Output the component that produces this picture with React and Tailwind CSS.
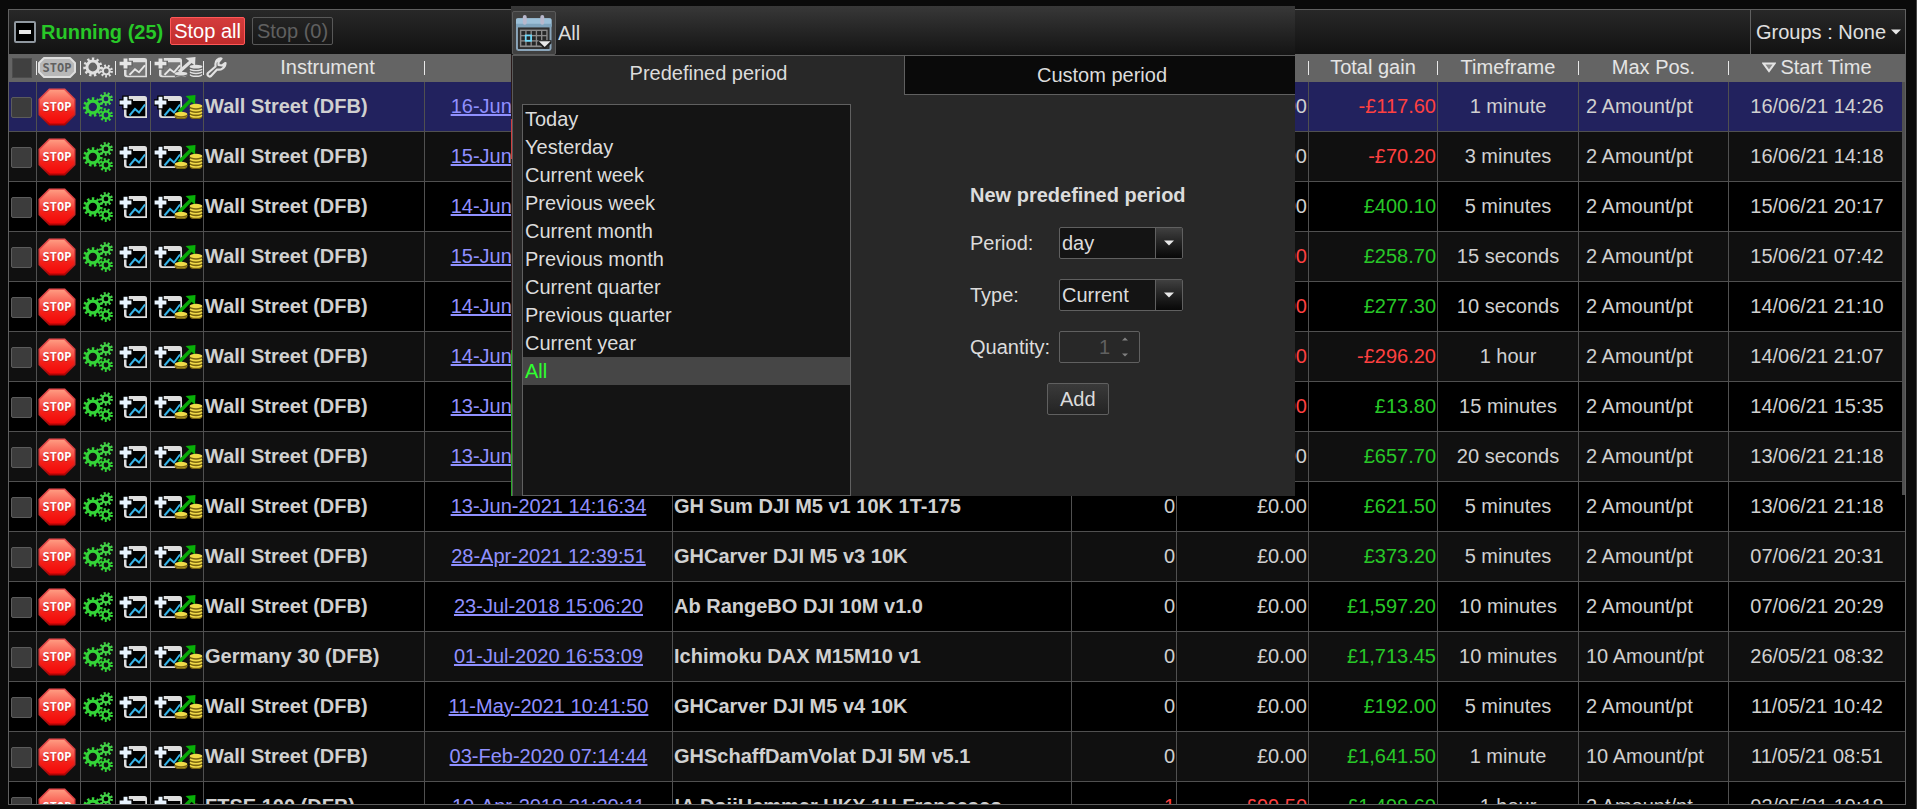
import React, { useState } from 'react';

const GREEN = 'text-[#28c828]';
const RED = 'text-[#ff4040]';

const PERIODS = [
  'Today',
  'Yesterday',
  'Current week',
  'Previous week',
  'Current month',
  'Previous month',
  'Current quarter',
  'Previous quarter',
  'Current year',
  'All',
];

const ROWS = [
  { instrument: 'Wall Street (DFB)', from: '16-Jun-2021 14:26:12', name: '', position: '0', gain: '£0.00', total: '-£117.60', timeframe: '1 minute', max: '2 Amount/pt', start: '16/06/21 14:26' },
  { instrument: 'Wall Street (DFB)', from: '15-Jun-2021 14:18:31', name: '', position: '0', gain: '£0.00', total: '-£70.20', timeframe: '3 minutes', max: '2 Amount/pt', start: '16/06/21 14:18' },
  { instrument: 'Wall Street (DFB)', from: '14-Jun-2021 20:17:04', name: '', position: '0', gain: '£0.00', total: '£400.10', timeframe: '5 minutes', max: '2 Amount/pt', start: '15/06/21 20:17' },
  { instrument: 'Wall Street (DFB)', from: '15-Jun-2021 07:42:10', name: '', position: '1', gain: '-£1.00', open: true, total: '£258.70', timeframe: '15 seconds', max: '2 Amount/pt', start: '15/06/21 07:42' },
  { instrument: 'Wall Street (DFB)', from: '14-Jun-2021 21:10:20', name: '', position: '1', gain: '-£1.00', open: true, total: '£277.30', timeframe: '10 seconds', max: '2 Amount/pt', start: '14/06/21 21:10' },
  { instrument: 'Wall Street (DFB)', from: '14-Jun-2021 21:07:44', name: '', position: '1', gain: '-£1.00', open: true, total: '-£296.20', timeframe: '1 hour', max: '2 Amount/pt', start: '14/06/21 21:07' },
  { instrument: 'Wall Street (DFB)', from: '13-Jun-2021 15:35:20', name: '', position: '1', gain: '-£1.00', open: true, total: '£13.80', timeframe: '15 minutes', max: '2 Amount/pt', start: '14/06/21 15:35' },
  { instrument: 'Wall Street (DFB)', from: '13-Jun-2021 21:18:40', name: '', position: '0', gain: '£0.00', total: '£657.70', timeframe: '20 seconds', max: '2 Amount/pt', start: '13/06/21 21:18' },
  { instrument: 'Wall Street (DFB)', from: '13-Jun-2021 14:16:34', name: 'GH Sum DJI M5 v1 10K 1T-175', position: '0', gain: '£0.00', total: '£621.50', timeframe: '5 minutes', max: '2 Amount/pt', start: '13/06/21 21:18' },
  { instrument: 'Wall Street (DFB)', from: '28-Apr-2021 12:39:51', name: 'GHCarver DJI M5 v3 10K', position: '0', gain: '£0.00', total: '£373.20', timeframe: '5 minutes', max: '2 Amount/pt', start: '07/06/21 20:31' },
  { instrument: 'Wall Street (DFB)', from: '23-Jul-2018 15:06:20', name: 'Ab RangeBO DJI 10M v1.0', position: '0', gain: '£0.00', total: '£1,597.20', timeframe: '10 minutes', max: '2 Amount/pt', start: '07/06/21 20:29' },
  { instrument: 'Germany 30 (DFB)', from: '01-Jul-2020 16:53:09', name: 'Ichimoku DAX M15M10 v1', position: '0', gain: '£0.00', total: '£1,713.45', timeframe: '10 minutes', max: '10 Amount/pt', start: '26/05/21 08:32' },
  { instrument: 'Wall Street (DFB)', from: '11-May-2021 10:41:50', name: 'GHCarver DJI M5 v4 10K', position: '0', gain: '£0.00', total: '£192.00', timeframe: '5 minutes', max: '2 Amount/pt', start: '11/05/21 10:42' },
  { instrument: 'Wall Street (DFB)', from: '03-Feb-2020 07:14:44', name: 'GHSchaffDamVolat DJI 5M v5.1', position: '0', gain: '£0.00', total: '£1,641.50', timeframe: '1 minute', max: '10 Amount/pt', start: '11/05/21 08:51' },
  { instrument: 'FTSE 100 (DFB)', from: '10-Apr-2018 21:20:11', name: '!A DojiHammer UKX 1H Francesco', position: '1', gain: '£99.50', open: true, total: '£1,498.60', timeframe: '1 hour', max: '2 Amount/pt', start: '03/05/21 19:18' },
];

const StopIcon = () => (
  <svg width="38" height="38" viewBox="0 0 38 38">
    <defs>
      <linearGradient id="stopRed" x1="0" y1="0" x2="0" y2="1">
        <stop offset="0" stopColor="#ff9a80" />
        <stop offset="0.4" stopColor="#f85a50" />
        <stop offset="0.65" stopColor="#f42018" />
        <stop offset="1" stopColor="#f40808" />
      </linearGradient>
      <linearGradient id="stopEdge" x1="0" y1="0" x2="0" y2="1">
        <stop offset="0" stopColor="#e85050" />
        <stop offset="0.6" stopColor="#d83030" />
        <stop offset="1" stopColor="#a80000" />
      </linearGradient>
    </defs>
    <polygon points="11,0.5 27,0.5 37.5,11 37.5,27 27,37.5 11,37.5 0.5,27 0.5,11" fill="url(#stopEdge)" />
    <polygon points="11.8,2 26.2,2 36,11.8 36,26 26.2,35.5 11.8,35.5 2,26 2,11.8" fill="url(#stopRed)" />
    <text x="19" y="24" textAnchor="middle" fontFamily="Liberation Sans Narrow, DejaVu Sans Mono, monospace" fontWeight="700" fontSize="12" fill="#c02020">STOP</text>
    <text x="19" y="23" textAnchor="middle" fontFamily="Liberation Sans Narrow, DejaVu Sans Mono, monospace" fontWeight="700" fontSize="12" fill="#ffffff">STOP</text>
  </svg>
);

const StopHeadIcon = () => (
  <svg width="38" height="21" viewBox="0 0 38 21">
    <polygon points="6,1 32,1 37,6 37,15 32,20 6,20 1,15 1,6" fill="#b8b8b8" stroke="#dedede" strokeWidth="2" strokeLinejoin="round" />
    <text x="19" y="15" textAnchor="middle" fontFamily="Liberation Sans Narrow, DejaVu Sans Mono, monospace" fontWeight="700" fontSize="12" fill="#606060">STOP</text>
  </svg>
);

const Gear = ({ cx, cy, r, teeth, color, width }) => {
  const toothRadius = r - 1.4;
  const step = (2 * Math.PI * toothRadius) / teeth;
  return (
    <g fill="none" stroke={color}>
      <circle cx={cx} cy={cy} r={r - 2.2 - width / 2} strokeWidth={width} />
      <circle cx={cx} cy={cy} r={toothRadius} strokeWidth="2.8" strokeDasharray={`${step * 0.5} ${step * 0.5}`} />
    </g>
  );
};

const GearsIcon = () => (
  <svg width="30" height="30" viewBox="0 0 30 30">
    <Gear cx={9.8} cy={15} r={9.8} teeth={11} width={3.4} color="#34d438" />
    <Gear cx={23} cy={6.9} r={6.9} teeth={9} width={2.3} color="#44d448" />
    <Gear cx={23} cy={23} r={6.9} teeth={9} width={2.3} color="#34d438" />
  </svg>
);

const GearsHeadIcon = () => (
  <svg width="30" height="21" viewBox="0 0 30 21">
    <Gear cx={9.8} cy={10} r={9.6} teeth={11} width={3} color="#e0e0e0" />
    <Gear cx={23.3} cy={14} r={6.6} teeth={9} width={2} color="#e0e0e0" />
  </svg>
);

// Chart window with a plus badge, "muted" is the grey header look
const ChartShape = ({ muted }) => (
  <g>
    <path d="M8 1 H25.500 a2.500 2.500 0 0 1 2.500 2.500 V23 H8 a3 3 0 0 1 -3 -3 V4 a3 3 0 0 1 3 -3 Z" fill="#dedede" />
    <path d="M7.500 6 H26.300 V21.300 H9 a1.500 1.500 0 0 1 -1.500 -1.500 Z" fill={muted ? '#757575' : '#000000'} />
    <path d="M10.500 20.500 L16 14 L20 17.500 L26 9.500" fill="none" stroke={muted ? '#e6e6e6' : '#35b4ea'} strokeWidth="2" />
    <path d="M6.500 0.500 V14.500 M0 7.500 H14" stroke={muted ? '#666666' : '#000000'} strokeWidth="6.500" />
    <path d="M6.500 1.800 V13.200 M0.600 7.500 H12.400" stroke={muted ? '#e6e6e6' : '#e8f4ff'} strokeWidth="3.900" />
  </g>
);

const ChartIcon = ({ muted }) => (
  <svg width="29" height={muted ? 21 : 24} viewBox="0 0 29 24" preserveAspectRatio="none">
    <ChartShape muted={muted} />
  </svg>
);

const Coin = ({ cx, cy, muted }) => (
  <g>
    <ellipse cx={cx} cy={cy + 1.2} rx="6.4" ry="2.6" fill={muted ? '#666666' : '#7a6410'} />
    <ellipse cx={cx} cy={cy} rx="6.4" ry="2.2" fill={muted ? '#e0e0e0' : '#f0da48'} />
  </g>
);

const ChartCoinsIcon = ({ muted }) => (
  <svg width="49" height={muted ? 21 : 24} viewBox="0 0 49 24" preserveAspectRatio="none">
    <ChartShape muted={muted} />
    <path d="M25 17 L38 4" stroke={muted ? '#e0e0e0' : '#08a808'} strokeWidth="3.600" />
    <path d="M31.500 1 L41.500 0 L41 10 Z" fill={muted ? '#e0e0e0' : '#08b008'} />
    <Coin cx={27} cy={20.600} muted={muted} />
    <Coin cx={27} cy={19} muted={muted} />
    <Coin cx={42} cy={20.600} muted={muted} />
    <Coin cx={42} cy={17.400} muted={muted} />
    <Coin cx={42} cy={14.200} muted={muted} />
    <Coin cx={42} cy={11} muted={muted} />
  </svg>
);

const WrenchIcon = () => (
  <svg width="21" height="21" viewBox="0 0 21 21" fill="none" stroke="#e2e2e2" strokeWidth="2.200" strokeLinejoin="round">
    <path d="M15.500 1.500 C12 1.200 9 4 9.500 8 L9.500 9.500 L2 16 C0.500 18 3 20.500 5 19 L11 12.500 C15 13.500 19.500 10.500 19.500 6 L16 8.500 L12.500 8 L12.500 5 Z" />
  </svg>
);

const CalendarIcon = () => (
  <svg width="36" height="36" viewBox="0 0 37 37">
    <rect x="1" y="4" width="34.500" height="32" rx="1.500" fill="#303030" stroke="#8ba6bb" strokeWidth="2" />
    <rect x="0" y="3.500" width="36.500" height="9" rx="1.500" fill="#9cc0d8" />
    <rect x="0" y="9" width="36.500" height="3.500" fill="#7fa4bd" />
    <rect x="4" y="15" width="28.500" height="18" fill="#8a8a8a" />
    {[0, 1, 2].map((row) =>
      [0, 1, 2, 3, 4].map((col) => (
        <rect key={`${row}-${col}`} x={5.5 + col * 5.4} y={16.5 + row * 5.4} width="4" height="4" fill="#262626" />
      ))
    )}
    <rect x="10" y="21" width="5.500" height="5.500" fill="#262626" stroke="#70d8f8" strokeWidth="1.800" />
    <rect x="7" y="0" width="4" height="10" rx="2" fill="#b8b8cc" />
    <rect x="25" y="0" width="4" height="10" rx="2" fill="#b8b8cc" />
    <path d="M23 26 H36.500 V29 L30.500 34.500 H28.500 L23 29 Z" fill="#202020" />
    <path d="M23.500 27 H35.500 L29.500 33 Z" fill="#e8e8e8" />
  </svg>
);

const Caret = () => (
  <svg width="10" height="6" viewBox="0 0 10 6">
    <path d="M0 0.500 H10 L5 5.500 Z" fill="#e8e8e8" />
  </svg>
);

const HeadCell = ({ children, last }) => (
  <th className="p-0 font-normal">
    <div className="flex h-7 items-center">
      <div className="flex flex-1 items-center justify-center pb-[2px]">{children}</div>
      {!last && <span className="h-[14px] w-px bg-[#e8e8e8]"></span>}
    </div>
  </th>
);

const IconCell = ({ label, children }) => (
  <td className="border-r border-b border-[#505050] p-0">
    <button aria-label={label} className="flex w-full items-center justify-center">
      {children}
    </button>
  </td>
);

const Combo = ({ id, label, options }) => (
  <div className="flex items-center">
    <label htmlFor={id} className="w-[89px]">{label}</label>
    <div className="relative flex h-8 w-[124px] overflow-hidden rounded-xs border border-[#606060] bg-[#141414]">
      <select id={id} className="w-full appearance-none bg-transparent pl-[2px] outline-none">
        {options.map((option) => (
          <option key={option}>{option}</option>
        ))}
      </select>
      <span className="pointer-events-none absolute inset-y-0 right-0 flex w-[27px] items-center justify-center border-l border-[#606060] bg-linear-to-b from-[#404040] to-[#080808]">
        <Caret />
      </span>
    </div>
  </div>
);

const PeriodPopup = () => {
  const [selected, setSelected] = useState('All');

  return (
    <div className="absolute top-[6px] left-[511px] w-[784px] text-[#dcdcdc]">
      <div className="flex h-[49px] items-end bg-linear-to-b from-[#383838] to-[#141414] pl-px">
        <button aria-label="Choose period" className="flex h-11 w-11 items-center justify-center rounded-xs border border-[#5a5a5a] bg-[#404040]">
          <CalendarIcon />
        </button>
        <span className="pb-[10px] pl-[2px] leading-6">{selected}</span>
      </div>

      <div className="flex">
        {/* profit bar */}
        <div className="flex w-px flex-col bg-[#2a1a1a]">
          <span className="mt-16 h-10 bg-[#d04040]"></span>
          <span className="flex-1"></span>
          <span className="h-[146px] bg-[#28a828]"></span>
        </div>
        <div className="flex-1 border-t border-l border-[#5a5a5a] bg-[#282828]">
          <div className="flex h-[39px]">
            <button className="w-1/2 pb-[6px]">Predefined period</button>
            <button className="w-1/2 border-b border-l border-[#606060] bg-[#0a0a0a] pl-1">Custom period</button>
          </div>

          <div className="flex pt-[9px] pl-[9px]">
            <ul className="h-[392px] w-[329px] border border-[#606060] bg-[#141414]">
              {PERIODS.map((period) => (
                <li key={period}>
                  <button
                    onClick={() => setSelected(period)}
                    className={`block h-7 w-full pl-[2px] text-left leading-7 ${period === selected ? 'bg-[#464646] text-[#30ff30]' : ''}`}
                  >
                    {period}
                  </button>
                </li>
              ))}
            </ul>

            <form className="ml-[119px] flex flex-col gap-5 pt-[79px]" onSubmit={(e) => e.preventDefault()}>
              <h2 className="leading-6 font-bold">New predefined period</h2>
              <Combo id="period" label="Period:" options={['day', 'week', 'month', 'quarter', 'year']} />
              <Combo id="type" label="Type:" options={['Current', 'Previous']} />
              <div className="flex items-center">
                <label htmlFor="quantity" className="w-[89px]">Quantity:</label>
                <div className="flex h-8 w-[81px] items-center rounded-xs border border-[#606060]">
                  <input id="quantity" disabled defaultValue="1" className="w-[50px] bg-transparent text-right text-[#606060]" />
                  <svg width="6" height="20" viewBox="0 0 6 20" className="ml-3">
                    <path d="M0 3.500 L3 0.500 L6 3.500 Z M0 16.500 L3 19.500 L6 16.500 Z" fill="#808080" />
                  </svg>
                </div>
              </div>
              <button className="h-8 w-[62px] self-center rounded-xs border border-[#606060] bg-linear-to-b from-[#3a3a3a] to-[#242424]">Add</button>
            </form>
          </div>
        </div>
      </div>
    </div>
  );
};

const App = () => {
  const [collapsed, setCollapsed] = useState(false);

  return (
    <div className="relative flex h-screen flex-col overflow-hidden border-r border-[#484848] bg-[#0a0a0a] pt-[9px] pr-[10px] pb-1 pl-2 font-['Liberation_Sans',sans-serif] text-[20px] text-[#d0d0d0]">
      <div className="flex min-h-0 flex-1 flex-col border border-[#606060]">
        {/* Toolbar */}
        <div className="flex h-11 shrink-0 items-center bg-linear-to-b from-[#282828] to-[#121212] pl-[5px]">
          <button
            aria-label="Collapse"
            onClick={() => setCollapsed(!collapsed)}
            className="flex h-[22px] w-[22px] items-center justify-center rounded-xs border-2 border-[#9098a0] bg-black"
          >
            <span className="h-1 w-3 bg-[#e8e8e8]"></span>
          </button>
          <h1 className="ml-[5px] font-bold text-[#28c828]">Running (25)</h1>
          <button className="mb-[2px] ml-[7px] h-7 rounded-xs border border-[#ff5858] bg-linear-to-b from-[#d43c3c] to-[#c02c2c] px-[3px] leading-6 text-white">Stop all</button>
          <button disabled className="mb-[2px] ml-[7px] h-7 rounded-xs border border-[#585858] px-1 leading-6 text-[#606060]">Stop (0)</button>
          <div className="relative ml-auto flex h-full w-[155px] items-center border-l border-[#606060]">
            <select aria-label="Groups" className="w-full appearance-none bg-transparent pl-[5px] text-[#e0e0e0] outline-none">
              <option>Groups : None</option>
            </select>
            <span className="pointer-events-none absolute right-1 flex">
              <Caret />
            </span>
          </div>
        </div>

        <div className="relative min-h-0 flex-1 overflow-hidden">
          <table className="w-full table-fixed border-separate border-spacing-0 whitespace-nowrap">
            <colgroup>
              <col className="w-[28px]" />
              <col className="w-[44px]" />
              <col className="w-[35px]" />
              <col className="w-[35px]" />
              <col className="w-[53px]" />
              <col className="w-[221px]" />
              <col className="w-[248px]" />
              <col />
              <col className="w-[105px]" />
              <col className="w-[132px]" />
              <col className="w-[129px]" />
              <col className="w-[141px]" />
              <col className="w-[150px]" />
              <col className="w-[176px]" />
            </colgroup>
            <thead className="bg-[#646464] text-[#e4e4e4]">
              <tr>
                <HeadCell>
                  <input type="checkbox" aria-label="Select all" className="mt-[2px] mr-[2px] h-5 w-5 appearance-none border border-[#4c4c4c] bg-[#404040]" />
                </HeadCell>
                <HeadCell><span className="pr-[3px]"><StopHeadIcon /></span></HeadCell>
                <HeadCell><GearsHeadIcon /></HeadCell>
                <HeadCell><span className="pl-px"><ChartIcon muted /></span></HeadCell>
                <HeadCell><span className="pl-[2px]"><ChartCoinsIcon muted /></span></HeadCell>
                <HeadCell>
                  <span className="pl-[2px]"><WrenchIcon /></span>
                  <span className="flex-1 pl-1">Instrument</span>
                </HeadCell>
                <HeadCell />
                <HeadCell />
                <HeadCell />
                <HeadCell />
                <HeadCell>Total gain</HeadCell>
                <HeadCell>Timeframe</HeadCell>
                <HeadCell>Max Pos.</HeadCell>
                <HeadCell last>
                  <svg width="14" height="11" viewBox="0 0 14 11" className="mr-1">
                    <path d="M1.500 1.500 H12.500 L7 9 Z" fill="#8a8a8a" stroke="#e4e4e4" strokeWidth="2" />
                  </svg>
                  Start Time
                </HeadCell>
              </tr>
            </thead>
            {!collapsed && (
              <tbody>
                {ROWS.map((row, i) => (
                  <tr key={row.start + i} className={`h-[50px] ${i === 0 ? 'bg-[#22225e]' : i % 2 ? 'bg-[#101010]' : 'bg-black'}`}>
                    <td className="border-r border-b border-[#505050] p-0">
                      <input type="checkbox" aria-label={`Select ${row.instrument}`} className="ml-[2px] mt-[2px] block h-[21px] w-[21px] appearance-none rounded-xs border border-[#5c5c5c] bg-[#3c3c3c]" />
                    </td>
                    <IconCell label="Stop"><span className="pr-[3px]"><StopIcon /></span></IconCell>
                    <IconCell label="Settings"><GearsIcon /></IconCell>
                    <IconCell label="Open chart"><span className="pl-px"><ChartIcon /></span></IconCell>
                    <IconCell label="Open chart with gains"><span className="pl-[2px]"><ChartCoinsIcon /></span></IconCell>
                    <td className="border-r border-b border-[#505050] p-0 pb-[2px] pl-px font-bold">{row.instrument}</td>
                    <td className="border-r border-b border-[#505050] p-0 pb-[2px] text-center">
                      <a href="#" className="text-[#9090ff] underline">{row.from}</a>
                    </td>
                    <td className="border-r border-b border-[#505050] p-0 pb-[2px] pl-px font-bold">{row.name}</td>
                    <td className={`border-r border-b border-[#505050] p-0 pr-px pb-[2px] text-right ${row.open ? RED : ''}`}>{row.position}</td>
                    <td className={`border-r border-b border-[#505050] p-0 pr-px pb-[2px] text-right ${row.open ? RED : ''}`}>{row.gain}</td>
                    <td className={`border-r border-b border-[#505050] p-0 pr-px pb-[2px] text-right ${row.total.startsWith('-') ? RED : GREEN}`}>{row.total}</td>
                    <td className="border-r border-b border-[#505050] p-0 pb-[2px] text-center">{row.timeframe}</td>
                    <td className="border-r border-b border-[#505050] p-0 pb-[2px] pl-[7px]">{row.max}</td>
                    <td className="border-b border-[#505050] p-0 pb-[2px] text-center">{row.start}</td>
                  </tr>
                ))}
              </tbody>
            )}
          </table>
          {/* Scroll thumb */}
          <div className="absolute top-7 right-0 h-[55%] w-[3px] bg-[#505050]"></div>
        </div>
      </div>

      <PeriodPopup />
    </div>
  );
};

export default App;
